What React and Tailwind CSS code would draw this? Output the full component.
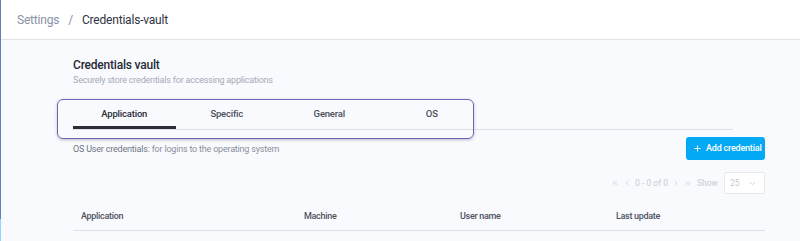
import { Plus, ChevronDown, ChevronLeft, ChevronRight, ChevronsLeft, ChevronsRight } from 'lucide-react';

const tabs = ['Application', 'Specific', 'General', 'OS'];
const columns = [
  { label: 'Application', w: 'w-[223px]' },
  { label: 'Machine', w: 'w-[156px]' },
  { label: 'User name', w: 'w-[156px]' },
  { label: 'Last update', w: 'flex-1' },
];

const App = () => {
  return (
    <div className="flex h-[241px] w-[800px] overflow-hidden bg-[#f9fafd] font-['Roboto',sans-serif]">
      {/* sidebar edge */}
      <div className="flex w-px shrink-0 flex-col">
        <div className="h-[219px] shrink-0 bg-[#5d82b5]"></div>
        <div className="flex-1 bg-[#8fd8fb]"></div>
      </div>

      <div className="relative flex flex-1 flex-col">
        {/* Breadcrumb */}
        <div className="flex h-10 shrink-0 items-center gap-[9px] border-b border-[#dfe3e9] bg-white pl-[16px] text-[12px] tracking-[-0.2px]">
          <span className="text-[#8792a4]">Settings</span>
          <span className="text-[#8792a4]">/</span>
          <span className="text-[#2f3441]">Credentials-vault</span>
        </div>

        <div className="ml-[72px] w-[692px] shrink-0 pt-[17px]">
          {/* Title */}
          <h1 className="text-[12px] leading-[16px] font-medium tracking-[-0.2px] text-[#262b36]">Credentials vault</h1>
          <p className="mt-[1px] text-[9px] leading-[12px] tracking-[-0.2px] text-[#a4abb7]">Securely store credentials for accessing applications</p>

          {/* Tabs */}
          <div className="mt-[12px] mr-[32px] flex border-b border-[#dfe1ea]">
            {tabs.map((t, i) => (
              <div
                key={t}
                className={`flex h-[31px] w-[102.5px] items-center justify-center border-b-[3px] pt-[4px] text-[9.5px] font-medium tracking-[-0.2px] ${
                  i === 0 ? 'border-[#2a2e38] text-[#2a2e38]' : 'border-transparent text-[#4a4f5c]'
                }`}
              >
                {t}
              </div>
            ))}
          </div>

          {/* Description + action */}
          <div className="mt-[7px] flex items-start justify-between">
            <p className="mt-[6px] text-[9px] tracking-[-0.2px] text-[#8a909c]">
              <span className="text-[#6f7684]">OS User credentials:</span> for logins to the operating system
            </p>
            <button className="flex h-[23px] w-[79px] items-center gap-[4px] rounded-[3px] bg-[#03a9f4] pl-[7px] text-[9px] font-medium tracking-[-0.2px] text-white">
              <Plus size={9} strokeWidth={2.5} />
              Add credential
            </button>
          </div>

          {/* Pagination */}
          <div className="mt-[12px] flex items-center justify-end gap-[4px] text-[8.5px] text-[#c6cad4]">
            <ChevronsLeft size={8} />
            <ChevronLeft size={8} />
            <span>0 - 0 of 0</span>
            <ChevronRight size={8} />
            <ChevronsRight size={8} />
            <span className="ml-[1px]">Show</span>
            <div className="ml-[2px] flex h-[22px] w-[41px] items-center justify-between rounded-[2px] border border-[#e6e8ee] bg-white pr-[7px] pl-[5px]">
              <span>25</span>
              <ChevronDown size={9} />
            </div>
          </div>

          {/* Table header */}
          <div className="mt-[9px] flex h-[28px] items-center border-b border-[#dcdfe8] pl-[8px] text-[9px] font-medium tracking-[-0.3px] text-[#4d5260]">
            {columns.map((c) => (
              <div key={c.label} className={c.w}>
                {c.label}
              </div>
            ))}
          </div>
        </div>

        {/* Highlight overlay around tabs */}
        <div className="absolute top-[99px] left-[56px] h-[40px] w-[417px] rounded-[6px] border-[1.5px] border-[#6a68b0] shadow-[0_1px_3px_rgba(60,60,120,0.35)]"></div>
      </div>
    </div>
  );
};

export default App;
